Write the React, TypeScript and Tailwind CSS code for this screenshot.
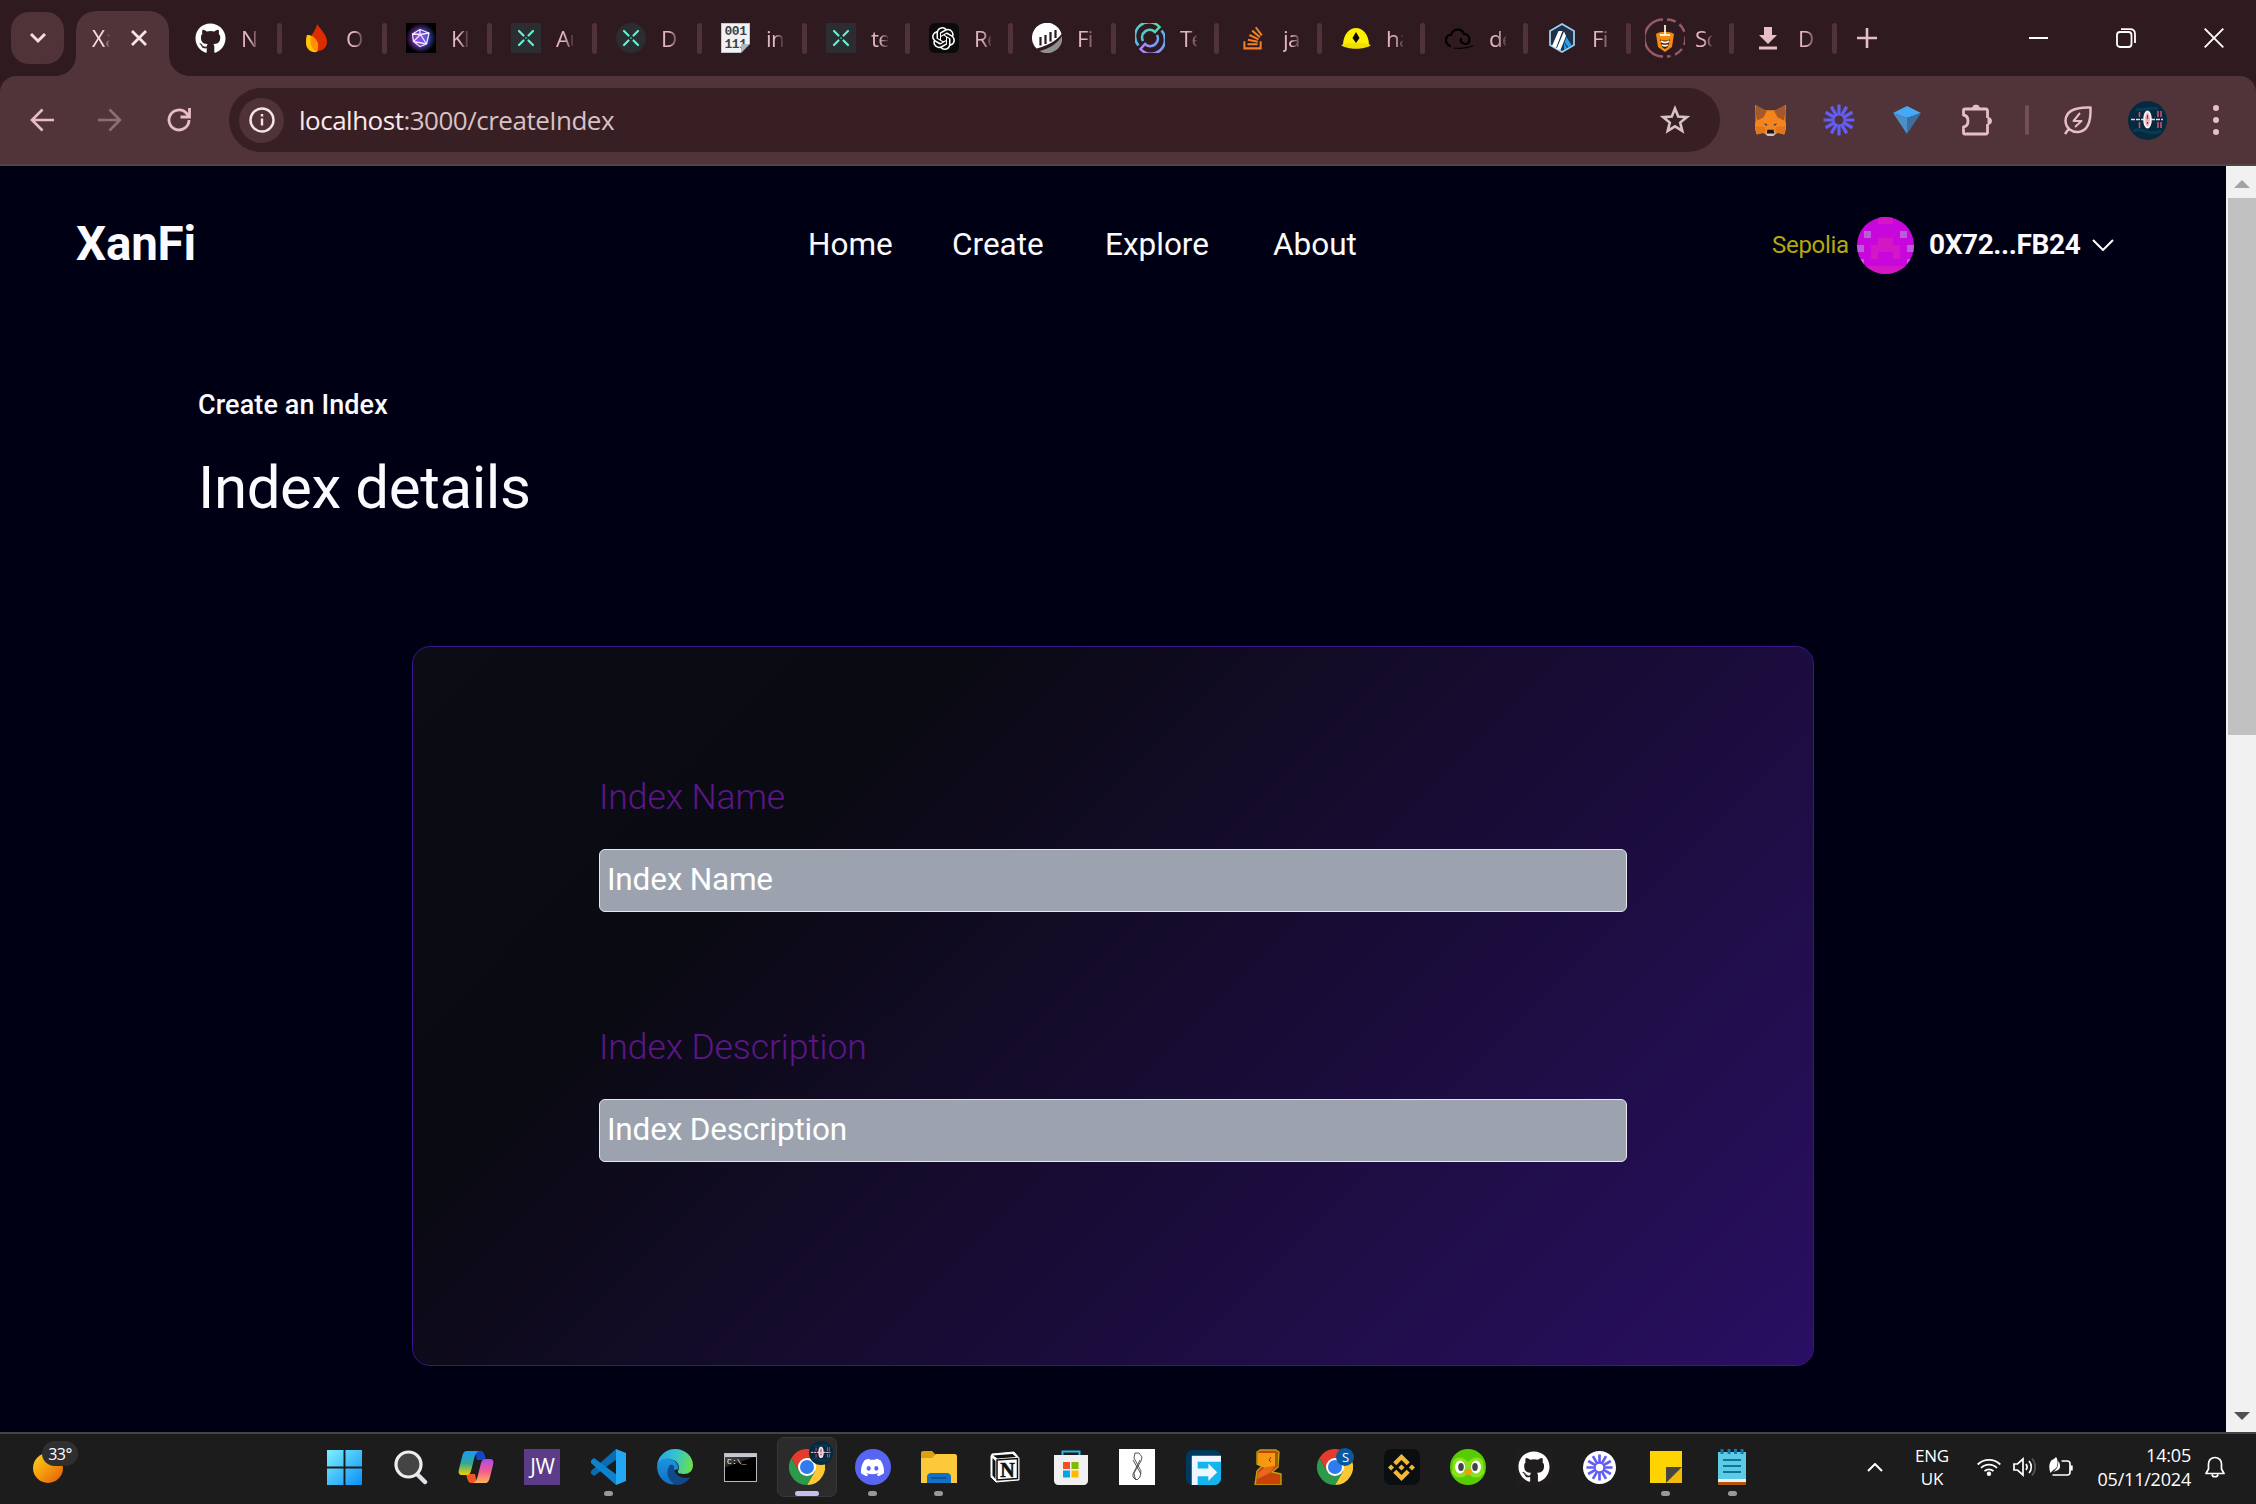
import React from "react";
import { FaGithub, FaStackOverflow } from "react-icons/fa";
import { SiOpenai, SiDiscord, SiBinance } from "react-icons/si";

const X = ({ round }: { round?: boolean }) => (
  <svg viewBox="0 0 30 30" className="size-[30px]">
    <rect width="30" height="30" rx={round ? 15 : 0} fill="#2b2d31" />
    <path d="M8 8l4.500 4.500M22 8l-4.500 4.500M8 22l4.500-4.500M22 22l-4.500-4.500" stroke="#63f0d6" strokeWidth="2.200" strokeLinecap="round" />
    <path d="M14 14l2 2M16 14l-2 2" stroke="#2c8f80" strokeWidth="1" />
  </svg>
);

const Flame = () => (
  <svg viewBox="0 0 30 30" className="size-[30px]">
    <path d="M16 1c4 6 10 11 10 18 0 5-4 9-9 9-6 0-8-5-8-10C9 12 15 8 16 1z" fill="#dd2c00" />
    <path d="M6 12c5-1 11 5 11 11 0 3-1 5-1 6-6 1-11-3-11-9 0-3 0-6 1-8z" fill="#ffc400" />
    <path d="M10 13c5 2 8 7 7 12l-1 4c-5-2-8-9-6-16z" fill="#ff9100" />
  </svg>
);

const Kleros = () => (
  <svg viewBox="0 0 30 30" className="size-[30px]">
    <defs>
      <linearGradient id="klc" x1="0" y1="0" x2="1" y2="0"><stop offset="0" stopColor="#b63fe0" /><stop offset=".5" stopColor="#7a52e0" /><stop offset="1" stopColor="#2f5fe8" /></linearGradient>
      <radialGradient id="klm"><stop offset=".3" stopColor="#fff" /><stop offset="1" stopColor="#000" /></radialGradient>
      <mask id="klk"><circle cx="15" cy="15" r="15" fill="url(#klm)" /></mask>
    </defs>
    <rect width="30" height="30" fill="#000" />
    <circle cx="15" cy="15" r="15" fill="url(#klc)" mask="url(#klk)" />
    <path d="M14 6.500l9 3.500-2.500 11L14 23.500l-6.500-5L6.500 11z M6.500 11l8 .500L23 10M14.500 11.500l6 9.500-13-2.500z M14 6.500v5" fill="none" stroke="#f0e6ff" strokeWidth="1.300" strokeLinejoin="round" />
  </svg>
);

const Binary = () => (
  <div className="relative flex h-[30px] w-[29px] flex-col items-center justify-center bg-[#f2f2f2] font-['Liberation_Mono'] text-[13px] leading-[13px] font-bold tracking-[-0.5px] text-[#3c4248] shadow-[inset_0_0_0_1px_#bfc8ce]">
    <span>001</span>
    <span>111</span>
    <div className="absolute right-0 bottom-0 size-[9px] bg-[#a9b8c2] [clip-path:polygon(0_0,100%_0,0_100%)]" />
    <div className="absolute right-0 bottom-0 size-[9px] bg-[#2f1a1f] [clip-path:polygon(100%_0,100%_100%,0_100%)]" />
  </div>
);

const Gpt = () => (
  <div className="flex size-[30px] items-center justify-center rounded-[6px] bg-[#0b0b0b]">
    <SiOpenai className="size-[23px] text-white" />
  </div>
);

const Etherscan = () => (
  <svg viewBox="0 0 30 30" className="size-[30px]">
    <path d="M4.500 25.500A15 15 0 1 1 29.500 11C25 18 14 23 4.500 25.500z" fill="#fff" />
    <path d="M7.500 28C17 26 26 20 30 13a15 15 0 0 1-22.500 15z" fill="#8e9090" />
    <path d="M8.500 14v8.500M13.500 12v9M18.500 9v9.500M23.500 7v8" stroke="#2f1a1f" strokeWidth="2.200" />
  </svg>
);

const Circle = () => (
  <svg viewBox="0 0 30 30" className="size-[30px]" fill="none" strokeWidth="2.600">
    <defs>
      <linearGradient id="c1" x1="0" x2="1" y1="1" y2="0"><stop offset="0" stopColor="#55b6f2" /><stop offset="1" stopColor="#4fe29a" /></linearGradient>
      <linearGradient id="c2" x1="0" x2="1" y1="1" y2="0"><stop offset="0" stopColor="#b57cff" /><stop offset="1" stopColor="#4db7ef" /></linearGradient>
    </defs>
    <path d="M3.500 22.500A13.600 13.600 0 0 1 24.500 4L20 9A7.600 7.600 0 0 0 8 18" stroke="url(#c1)" />
    <path d="M26.500 7.500A13.600 13.600 0 0 1 5.500 26L10 21A7.600 7.600 0 0 0 22 12" stroke="url(#c2)" />
  </svg>
);

const Hat = () => (
  <svg viewBox="0 0 30 30" className="size-[30px]">
    <path d="M2 22C2 12 8 5 15 5s13 7 13 17z" fill="#fff100" />
    <path d="M0 22c8-3 22-3 30 0-6 5-24 5-30 0z" fill="#f0e000" />
    <path d="M15 9l3.500 6-3.500 5-3.500-5z" fill="#0a0a0a" />
  </svg>
);

const Cloud = () => (
  <svg viewBox="0 0 30 30" className="size-[30px]" fill="none" stroke="#000" strokeWidth="2.200" strokeLinecap="round">
    <path d="M6 23c-6-3-5-11 1-11C9 5 18 5 20 11c7 0 7 11 1 10-3-1-5-2-4-5" />
    <path d="M10 25c7 1 13 0 19-2" strokeWidth="1.200" />
  </svg>
);

const Arbitrum = () => (
  <svg viewBox="0 0 30 30" className="size-[30px]">
    <path d="M15 1l12 7v14l-12 7-12-7V8z" fill="#213147" stroke="#9dcced" strokeWidth="1.800" />
    <path d="M11.500 8h4L9 25l-4-2z M17 8.500l2 4.500-5.500 14-4-1z" fill="#fff" />
    <path d="M19.500 14l5 8-3 2.500-4-5z M17 20l3 5-3 2z" fill="#28a0f0" />
  </svg>
);

const Sherlock = () => (
  <svg viewBox="0 0 40 40" className="-mx-[5px] size-[40px] shrink-0">
    <path d="M18 1.500A18.500 18.500 0 0 0 18 38.500" fill="none" stroke="#96596a" strokeWidth="2.400" />
    <path d="M22 1.500A18.500 18.500 0 0 1 22 38.500" fill="none" stroke="#96596a" strokeWidth="2.400" strokeDasharray="9 4.500" />
    <path d="M11 16c4-3 14-3 18 0l-2 13-7 5-7-5z" fill="#f58a12" />
    <path d="M15 21c2 2 8 2 10 0l-2 8-3 2-3-2z" fill="#3a1a10" />
    <path d="M16 23c2 2 6 2 8 0M17 27c2 1 4 1 6 0M15 17h10M20 7v10" fill="none" stroke="#fff3d8" strokeWidth="1.800" />
  </svg>
);

const Download = () => (
  <svg viewBox="0 0 30 30" className="size-[30px]" fill="#e7bdc6">
    <path d="M11 4h8v8h5l-9 9-9-9h5z M6 23.500h18v3H6z" />
  </svg>
);

const tabs: { t: string; icon: React.ReactNode }[] = [
  { t: "N", icon: <FaGithub className="size-[31px] text-white" /> },
  { t: "O", icon: <Flame /> },
  { t: "Kl", icon: <Kleros /> },
  { t: "Au", icon: <X /> },
  { t: "D", icon: <X round /> },
  { t: "in", icon: <Binary /> },
  { t: "te", icon: <X /> },
  { t: "Re", icon: <Gpt /> },
  { t: "Fi", icon: <Etherscan /> },
  { t: "Te", icon: <Circle /> },
  { t: "ja", icon: <FaStackOverflow className="size-[26px] text-[#f48024]" /> },
  { t: "ha", icon: <Hat /> },
  { t: "de", icon: <Cloud /> },
  { t: "Fi", icon: <Arbitrum /> },
  { t: "Sc", icon: <Sherlock /> },
  { t: "D", icon: <Download /> },
];

const TabStrip = () => (
  <div className="flex h-[76px] items-center bg-[#2f1a1f] pl-[11px]">
    <button className="flex h-[52px] w-[53px] items-center justify-center rounded-[18px] bg-[#503338]">
      <svg viewBox="0 0 20 20" className="size-5" fill="none" stroke="#f3dde0" strokeWidth="3"><path d="M3 6l7 7 7-7" /></svg>
    </button>
    <div className="relative ml-3 flex h-[65px] w-[93px] items-center self-end rounded-t-[20px] bg-[#503439] pb-[11px] pl-4">
      <div className="absolute bottom-0 -left-5 size-5 bg-[radial-gradient(circle_at_0_0,transparent_19.500px,#503439_20px)]" />
      <div className="absolute -right-5 bottom-0 size-5 bg-[radial-gradient(circle_at_100%_0,transparent_19.500px,#503439_20px)]" />
      <span className="w-[18px] text-[23px] text-[#f3dde0] [mask-image:linear-gradient(to_right,black_60%,transparent)]">Xa</span>
      <svg viewBox="0 0 16 16" className="ml-[21px] size-4" stroke="#f6e4e6" strokeWidth="2.800"><path d="M1 1l14 14M15 1L1 15" /></svg>
    </div>
    <div className="ml-[8px] flex">
      {tabs.map((tab, i) => (
        <div key={i} className={`flex h-[31px] items-center ${i < 6 ? "w-[105px]" : "w-[103px]"}`}>
          <div className="ml-[18px] flex w-[31px] shrink-0 items-center justify-center">{tab.icon}</div>
          <span className="mt-[2px] ml-[15px] w-[17px] shrink-0 text-[22.500px] tracking-[-0.800px] whitespace-nowrap text-[#e3b6bf] [mask-image:linear-gradient(to_right,black_50%,transparent_110%)]">{tab.t}</span>
          <div className="ml-auto h-[31px] w-[5px] rounded-full bg-[#503338]" />
        </div>
      ))}
    </div>
    <svg viewBox="0 0 20 20" className="ml-[20px] size-5" stroke="#e7bdc6" strokeWidth="2.600"><path d="M10 0v20M0 10h20" /></svg>
    <div className="mr-[32px] ml-auto flex items-center">
      <div className="h-[2px] w-[19px] bg-white" />
      <svg viewBox="0 0 20 20" className="ml-[68px] size-5" fill="none" stroke="#fff" strokeWidth="1.800">
        <rect x="1" y="4" width="14.500" height="15" rx="3" /><path d="M5 1.200h9c3 0 5 2 5 5V15" />
      </svg>
      <svg viewBox="0 0 20 20" className="ml-[68px] size-5" stroke="#fff" strokeWidth="1.900"><path d="M.7.700l18.600 18.600M19.300.700L.7 19.300" /></svg>
    </div>
  </div>
);

const Loom = ({ className, color = "#625df5" }: { className: string; color?: string }) => (
  <svg viewBox="-16 -16 32 32" className={className}>
    {[0, 30, 60, 90, 120, 150].map((a) => (
      <path key={a} d="M-15.500 0h10.500M5 0h10.500" transform={`rotate(${a})`} stroke={color} strokeWidth="3.200" />
    ))}
    <circle r="5.500" fill="none" stroke={color} strokeWidth="2" />
  </svg>
);

const Avatar = ({ className }: { className: string }) => (
  <svg viewBox="0 0 39 39" className={className}>
    <circle cx="19.500" cy="19.500" r="19.500" fill="#052a40" />
    <path d="M5 30c8-5 16 6 28 0M8 8c8 3 14-3 22 0" stroke="#0b3a52" strokeWidth="3" fill="none" />
    <path d="M3 18.500h32" stroke="#f2d3da" strokeWidth="1.600" strokeDasharray="4 1" />
    <ellipse cx="19.500" cy="18.500" rx="3.300" ry="8" fill="#e9aebd" stroke="#fbeef0" strokeWidth="2" />
    <path d="M19.500 14v4M19.500 21v2" stroke="#a02b4b" strokeWidth="1.200" />
    <path d="M11.500 11v5M11.500 21v6M30 10v6M30 21v6M33 10v6M33 21v6" stroke="#c7506f" strokeWidth="1.600" />
  </svg>
);

const Toolbar = () => (
  <div className="bg-[#2f1a1f]">
    <div className="flex h-[90px] items-center rounded-t-[16px] border-b-2 border-[#534345] bg-[#503439] pl-[30px]">
      <svg viewBox="0 0 24 24" className="size-6" fill="none" stroke="#e7bdc6" strokeWidth="2.600"><path d="M24 12H2M12.500 1.500L2 12l10.500 10.500" /></svg>
      <svg viewBox="0 0 24 24" className="ml-11 size-6" fill="none" stroke="#8d6e74" strokeWidth="2.600"><path d="M0 12h22M11.500 1.500L22 12 11.500 22.500" /></svg>
      <svg viewBox="0 0 24 24" className="ml-[45px] size-6" fill="none" stroke="#e7bdc6" strokeWidth="2.800"><path d="M22 12a10 10 0 1 1-3-7.200L22 8M22.500 0v9h-9" /></svg>
      <div className="ml-[38px] flex h-16 w-[1491px] items-center rounded-full bg-[#381f23] pl-[10px]">
        <div className="flex size-[45px] items-center justify-center rounded-full bg-[#503338]">
          <svg viewBox="0 0 26 26" className="size-[26px]" fill="none" stroke="#f6e4e6" strokeWidth="2.400"><circle cx="13" cy="13" r="11.500" /><path d="M13 11.500v7M13 7v2.500" /></svg>
        </div>
        <span className="ml-[15px] text-[26px] tracking-[-0.500px] text-[#d9c2c5]"><span className="text-[#fbe9eb]">localhost</span>:3000/createIndex</span>
        <svg viewBox="0 0 30 30" className="mr-[30px] ml-auto size-[30px]" fill="none" stroke="#d9c2c5" strokeWidth="2.600"><path d="M15 3.500l3.200 8 8.600.600-6.600 5.500 2.100 8.300L15 21.300l-7.300 4.600 2.100-8.300-6.600-5.500 8.600-.600z" /></svg>
      </div>
      <svg viewBox="0 0 30 30" className="ml-[35px] size-[31px]">
        <path d="M0 0l10 5h10l10-5-.5 15 1 6.500-2 7-6-1.500-3 1-1.500 2h-6l-1.500-2-3-1-6 1.500-2-7 1-6.500z" fill="#f5841f" />
        <path d="M1 0l10.500 6L8 12l-6 3L.5 7zM29 0L18.500 6 22 12l6 3 1.500-8z" fill="#a3592a" />
        <path d="M0 21h9l1.500 5L2 28.500zM30 21h-9l-1.500 5 8.500 2.500z" fill="#e2761b" />
        <path d="M11 25h8l1 3-2.500 2h-5L10 28z" fill="#d7c1b3" /><path d="M12 24h6l.8 3.500h-7.600z" fill="#161616" />
        <path d="M8.500 18l3.500.500-1 2zM21.500 18l-3.500.500 1 2z" fill="#3b4a57" />
      </svg>
      <Loom className="ml-[37px] size-[32px]" />
      <svg viewBox="0 0 28 28" className="ml-[38px] size-7">
        <path d="M14 0l14 7-14 5L0 7z" fill="#45a9f5" /><path d="M0 7l14 5v16z" fill="#4a8fc7" /><path d="M28 7l-14 5v16z" fill="#3a6f9f" />
      </svg>
      <svg viewBox="0 0 32 32" className="ml-10 size-8" fill="none" stroke="#e7bdc6" strokeWidth="2.800" strokeLinejoin="round">
        <path d="M4 5h8.500M17.500 5H25a1.500 1.500 0 0 1 1.500 1.500V14M26.500 20v8.500A1.500 1.500 0 0 1 25 30H4a1.500 1.500 0 0 1-1.500-1.500V23c6-1 6-11 0-12V6.500A1.500 1.500 0 0 1 4 5M12 5h7" />
        <path d="M11.500 4.500a3.500 3.500 0 0 1 7 0zM27 13.500a3.500 3.500 0 0 1 0 7z" fill="#e7bdc6" strokeWidth="1" />
      </svg>
      <div className="ml-[32px] h-[30px] w-[4px] rounded-full bg-[#744f57]" />
      <svg viewBox="0 0 30 30" className="ml-[34px] size-[30px]" fill="none" stroke="#e7bdc6" strokeWidth="2.500" strokeLinejoin="round">
        <path d="M27.500 2.500C14 2 3 5 2.500 15.500c0 8 7 12 13 11.500C25 26 28 16 27.500 2.500zM6 23.500L2 29" />
        <path d="M17 8l-6.500 8h8L12 22" strokeWidth="2" />
      </svg>
      <Avatar className="ml-[35px] size-[39px]" />
      <div className="ml-[46px] flex flex-col gap-[6px]">
        {[0, 1, 2].map((i) => <div key={i} className="size-[6px] rounded-full bg-[#e7bdc6]" />)}
      </div>
    </div>
  </div>
);

const IDENTICON_ROWS = ["...bb...", "........", ".p....p.", "...bb...", "p.bbbb.p", "..b..b..", "p......p", "bbbbbbbb"];

const Identicon = () => (
  <div className="grid size-[57px] shrink-0 grid-cols-8 grid-rows-8 overflow-hidden rounded-full bg-[#c807dc]">
    {IDENTICON_ROWS.join("").split("").map((c, i) => (
      <div key={i} className={c === "b" ? "bg-[#d416c6]" : c === "p" ? "bg-[#b95fd6]" : ""} />
    ))}
  </div>
);

const Field = ({ label, className }: { label: string; className: string }) => (
  <div className={className}>
    <label className="block h-[54px] text-[35.500px] leading-[54px] font-light tracking-[-0.100px] text-[#5c1688]">{label}</label>
    <div className="mt-[25px] flex h-[63px] w-[1028px] items-center rounded-[6px] border border-[#e5e7eb] bg-[#9ca3af] pb-[2px] pl-[7px] text-[31.500px] tracking-[-0.200px] text-white">
      {label}
    </div>
  </div>
);

const Page = () => (
  <div className="flex h-[1266px] bg-[#000014] font-[Roboto,sans-serif] text-[#fafaff]">
    <div className="flex w-[2226px] flex-col">
      <header className="flex h-[158px] items-center pl-[76px]">
        <div className="w-[732px] text-[47.500px] font-bold tracking-[-0.200px]">XanFi</div>
        <nav className="flex text-[31.500px]">
          <a className="w-[144px]">Home</a>
          <a className="w-[153px]">Create</a>
          <a className="w-[168px]">Explore</a>
          <a className="w-[120px]">About</a>
        </nav>
        <div className="ml-auto flex w-[454px] items-center">
          <span className="w-[85px] text-[24px] tracking-[-0.300px] text-[#b3a80c]">Sepolia</span>
          <Identicon />
          <span className="ml-[15px] w-[152px] text-[28px] font-bold tracking-[-0.400px]">0X72...FB24</span>
          <svg viewBox="0 0 22 12" className="ml-[11px] h-3 w-[22px]" fill="none" stroke="#fff" strokeWidth="2"><path d="M1 1l10 10L21 1" /></svg>
        </div>
      </header>
      <div className="mt-[61px] ml-[198px] text-[27px] leading-[40px] font-medium tracking-[0.100px]">Create an Index</div>
      <h1 className="mt-[28px] ml-[198px] text-[60px] leading-[70px] tracking-[-0.400px]">Index details</h1>
      <section className="mt-[123px] ml-[412px] h-[720px] w-[1402px] rounded-[18px] border border-[#3c1491] bg-[linear-gradient(135deg,#0c0d14_0%,#0a0a12_26%,#2a0f63_100%)] pl-[186px]">
        <Field label="Index Name" className="mt-[123px]" />
        <Field label="Index Description" className="mt-[108px]" />
      </section>
    </div>
    <div className="flex w-[30px] flex-col bg-[#f1f1f1] pl-[2px]">
      <div className="flex h-8 items-center justify-center pt-1"><div className="h-[8px] w-4 bg-[#a3a3a3] [clip-path:polygon(50%_0,100%_100%,0_100%)]" /></div>
      <div className="h-[537px] bg-[#c1c1c1]" />
      <div className="mt-auto flex h-8 items-center justify-center"><div className="h-[8px] w-4 bg-[#505050] [clip-path:polygon(0_0,100%_0,50%_100%)]" /></div>
    </div>
  </div>
);

const Chrome = () => (
  <svg viewBox="-18 -18 36 36" className="size-9">
    <path d="M-15.600-9A18 18 0 0 1 15.600-9H0L-7.800 4.500z" fill="#e33b2e" />
    <path d="M15.600-9A18 18 0 0 1 0 18L7.800 4.500 0-9z" fill="#fcc934" />
    <path d="M0 18A18 18 0 0 1-15.600-9L-7.800 4.500 7.800 4.500z" fill="#2d9a4b" />
    <circle r="9" fill="#fff" /><circle r="7" fill="#2f7bf0" />
  </svg>
);

const BAR: { icon: React.ReactNode; run?: boolean; active?: boolean }[] = [
  { icon: (
    <svg viewBox="0 0 36 36" className="size-[35px]"><defs><linearGradient id="w" x1="0" y1="0" x2="1" y2="1" gradientUnits="objectBoundingBox"><stop offset="0" stopColor="#7df1ff" /><stop offset="1" stopColor="#0a8ff5" /></linearGradient></defs>
      <path d="M0 0h17v17H0zM19 0h17v17H19zM0 19h17v17H0zM19 19h17v17H19z" fill="url(#w)" /></svg>) },
  { icon: (
    <svg viewBox="0 0 36 36" className="size-9"><path d="M24 24l9 9" stroke="#dfe3e8" strokeWidth="4.500" strokeLinecap="round" /><circle cx="16.500" cy="15.500" r="12.500" fill="#444" stroke="#eceff1" strokeWidth="3.200" /></svg>) },
  { icon: (
    <svg viewBox="0 0 36 36" className="size-9">
      <defs>
        <linearGradient id="p1" x1="0" y1="0" x2="0" y2="1"><stop offset="0" stopColor="#199af5" /><stop offset=".5" stopColor="#2fa79a" /><stop offset="1" stopColor="#f2d000" /></linearGradient>
        <linearGradient id="p2" x1="0" y1="0" x2="0" y2="1"><stop offset="0" stopColor="#a94df0" /><stop offset=".5" stopColor="#f25b8d" /><stop offset="1" stopColor="#ffb357" /></linearGradient>
      </defs>
      <path d="M17 2h6c2 0 3 2 4 5l1 4h-9z" fill="#1547c5" />
      <path d="M19 34h-6c-2 0-3-2-4-5l-1-4h9z" fill="#f2552c" />
      <path d="M9 2h12c-3 1-4 4-5 8l-3 12c-1 3-2 4-5 4H4c-3 0-4-2-3-6L4 8c1-4 2-6 5-6z" fill="url(#p1)" />
      <path d="M27 34H15c3-1 4-4 5-8l3-12c1-3 2-4 5-4h4c3 0 4 2 3 6l-3 12c-1 4-2 6-5 6z" fill="url(#p2)" />
    </svg>) },
  { icon: <div className="flex size-9 items-center justify-center bg-[#5c3b88] text-[21px] tracking-[-0.500px] text-white">JW</div> },
  { run: true, icon: (
    <svg viewBox="0 0 36 36" className="size-9"><path d="M26 0l1 10L4 27l-3-2.500v-2.500z" fill="#0a6db3" /><path d="M26 36l1-10L4 9l-3 2.500v2.500z" fill="#0b83cf" /><path d="M26 0l10 4v28l-10 4z" fill="#24a8f2" /></svg>) },
  { icon: (
    <svg viewBox="0 0 36 36" className="size-9">
      <defs>
        <linearGradient id="e1" x1="0" y1=".3" x2="1" y2=".5"><stop offset="0" stopColor="#2aa6e8" /><stop offset=".5" stopColor="#35c4cf" /><stop offset="1" stopColor="#6be04a" /></linearGradient>
        <linearGradient id="e2" x1="0" y1="0" x2="0" y2="1"><stop offset="0" stopColor="#1b95e0" /><stop offset="1" stopColor="#0f6fc4" /></linearGradient>
      </defs>
      <path d="M0 17A18 18 0 0 1 18 0c11 0 18 8 18 16 0 6-4 9-9 9-4 0-7-1-6-3 2-3 1-9-5-11C9 8 2 11 0 17z" fill="url(#e1)" />
      <path d="M0 17C2 10 9 8 15 10.500c5 2 7 7 6 10-6-1-9 7-3 15C8 36 0 28 0 17z" fill="url(#e2)" />
      <path d="M13 16c-4 5-4 16 7 20 6 0 11-4 13.500-8C27 31 16 27 17 17c-1-1-3-1.500-4-1z" fill="#114a8b" />
    </svg>) },
  { icon: (
    <div className="h-[29px] w-[33px] border border-[#b5b9c0] bg-black bg-[linear-gradient(160deg,#555_0%,#222_35%,#000_36%)]">
      <div className="h-[3px] bg-[#c4c8d0]" /><div className="pl-[2px] font-['Liberation_Mono'] text-[8px] leading-[10px] text-white">C:\_</div>
    </div>) },
  { active: true, icon: <div className="relative"><Chrome /><Avatar className="absolute -top-[8px] -right-[8px] size-6" /></div> },
  { run: true, icon: <div className="flex size-9 items-center justify-center rounded-full bg-[#5865f2]"><SiDiscord className="size-[23px] text-white" /></div> },
  { run: true, icon: (
    <svg viewBox="0 0 36 36" className="size-9"><path d="M0 4c0-1 1-2 2-2h9l4 4v4H0z" fill="#dca00c" /><path d="M0 9h11l4-4h19c1 0 2 1 2 2v27H0z" fill="#fcc93a" /><path d="M6 34v-6c0-3 2-4 4-4h16c2 0 4 1 4 4v6z" fill="#1271c4" /><path d="M11 29h14" stroke="#0a4d8c" strokeWidth="1.600" strokeLinecap="round" /></svg>) },
  { icon: (
    <svg viewBox="0 0 36 36" className="size-9"><path d="M4 7v21l5 5 23-2V9l-5-6L5 5z" fill="#fff" stroke="#fff" strokeWidth="1" strokeLinejoin="round" /><path d="M6 6.500l19.500-1.500 3.500 3-18.500 1.500z M5.500 9l3 3v18l-3-3.500z" fill="#111" /><path d="M10 11l20.500-1.500v20L10 31z" fill="#fff" stroke="#111" strokeWidth="1.500" /><text x="20.500" y="27.500" fontFamily="Liberation Serif" fontWeight="700" fontSize="20" textAnchor="middle" fill="#111" stroke="#111" strokeWidth=".600">N</text></svg>) },
  { icon: (
    <svg viewBox="0 0 36 36" className="size-9"><path d="M9.500 8V2.500h17V8" fill="none" stroke="#2fb2e8" strokeWidth="2" /><path d="M1 6h34v26c0 2-2 4-4 4H5c-2 0-4-2-4-4z" fill="#f0f0f0" /><path d="M10 13h7v7h-7z" fill="#f25022" /><path d="M18.500 13h7v7h-7z" fill="#7fba00" /><path d="M10 21.500h7v7h-7z" fill="#00a4ef" /><path d="M18.500 21.500h7v7h-7z" fill="#ffb900" /></svg>) },
  { icon: (
    <svg viewBox="0 0 36 36" className="size-9"><path d="M0 0h36v36H0z" fill="#fff" /><path d="M16 4h4l3 4-1 4-7 12 1 5 2 2 3-3 1-6-7-13zM14 11l8 14M21 11l-7 14v3l3 3" fill="none" stroke="#444" strokeWidth=".900" /></svg>) },
  { icon: (
    <svg viewBox="0 0 36 36" className="size-[35px]"><rect width="36" height="36" rx="7" fill="#00395e" /><path d="M6 8h30v21c0 4-3 7-7 7H6z" fill="#13b5ec" /><path d="M6 6h30v6H12v7h11v-5l9 9-9 9v-5H12v9H6z" fill="#eef7fd" /></svg>) },
  { icon: (
    <svg viewBox="0 0 36 36" className="size-9">
      <path d="M6 3l3-2h16l3 2-1 15-6 5 9 2v11H4l2-14 5-5-5-2z" fill="#c9420c" stroke="#b8a40c" strokeWidth="1.400" strokeLinejoin="round" />
      <path d="M7 4h17v13l-10 2-7-3z" fill="#f39a12" /><path d="M13 19l11-2-5 7-13 6 1-6z" fill="#e8671a" /><path d="M24 4l3-1v14l-3 1z" fill="#a85a0c" />
      <path d="M20 8l-2 3 2 2" stroke="#7a3d08" fill="none" strokeWidth="1" />
    </svg>) },
  { icon: <div className="relative"><Chrome /><div className="absolute -top-px -right-px flex size-[18px] items-center justify-center rounded-full bg-[#0b57a0] text-[13px] leading-none text-white">S</div></div> },
  { icon: <div className="flex size-9 items-center justify-center rounded-[7px] bg-[#0b0e11]"><SiBinance className="size-[27px] text-[#f3ba2f]" /></div> },
  { icon: (
    <svg viewBox="0 0 36 36" className="size-9"><circle cx="18" cy="18" r="18" fill="#58cc02" /><path d="M3 12c5-6 11-3 15 1 4-4 10-7 15-1l1 12c-4 6-12 6-16 0-4 6-12 6-16 0z" fill="#89e219" /><ellipse cx="10" cy="18" rx="5" ry="6.500" fill="#fff" /><ellipse cx="26" cy="18" rx="5" ry="6.500" fill="#fff" /><ellipse cx="11" cy="18" rx="2.800" ry="4" fill="#40454a" /><ellipse cx="25" cy="18" rx="2.800" ry="4" fill="#40454a" /><ellipse cx="18" cy="23" rx="3.500" ry="3" fill="#f39a12" /></svg>) },
  { icon: <div className="flex size-9 items-center justify-center bg-[#211c1f]"><FaGithub className="size-8 text-white" /></div> },
  { icon: <div className="flex size-[33px] items-center justify-center rounded-full bg-white"><Loom className="size-[27px]" /></div> },
  { run: true, icon: (
    <svg viewBox="0 0 32 32" className="size-8"><path d="M0 0h32v32H0z" fill="#fdd300" /><path d="M16 32L32 16v16z" fill="#f2b90c" /><path d="M16 16h16L16 32z" fill="#454545" /></svg>) },
  { run: true, icon: (
    <svg viewBox="0 0 28 36" className="h-9 w-7"><path d="M0 32h28v3a1 1 0 0 1-1 1H1a1 1 0 0 1-1-1z" fill="#b5540e" /><path d="M0 30h28v3H0z" fill="#eee" /><path d="M0 3h28v27H0z" fill="#5ecbe6" /><path d="M5 11h18M5 17h18M5 23h18" stroke="#0b7896" strokeWidth="2" /><path d="M4 0v5M11 0v5M17.500 0v5M24 0v5" stroke="#1279a8" strokeWidth="3" /></svg>) },
];

const Taskbar = () => (
  <div className="flex h-[72px] border-t-2 border-[#454545] bg-[#1c1c1c] text-white">
    <div className="w-[311px] pt-[7px] pl-[33px]">
      <div className="relative h-[45px] w-[46px]">
        <div className="absolute bottom-[3px] left-0 size-[30px] rounded-full bg-[linear-gradient(135deg,#ffd21a,#f59a0c_50%,#e2560a)]" />
        <div className="absolute top-0 left-[9px] flex h-[25px] w-9 items-center justify-center rounded-full bg-[#2f2f2f] text-[16px] tracking-[-0.500px]">33°</div>
      </div>
    </div>
    {BAR.map((b, i) => (
      <div key={i} className="flex w-[66.100px] justify-center pt-[3px]">
        <div className={`relative flex h-[60px] w-[60px] items-center justify-center rounded-[7px] ${b.active ? "border border-[#383838] bg-[#2b2b2b]" : ""}`}>
          {b.icon}
          {b.run && <div className="absolute bottom-px h-[5px] w-[9px] rounded-full bg-[#999]" />}
          {b.active && <div className="absolute bottom-0 h-[5px] w-6 rounded-full bg-[#c6bfee]" />}
        </div>
      </div>
    ))}
    <div className="ml-auto flex w-[389px] items-center pb-[4px]">
      <svg viewBox="0 0 16 9" className="h-[9px] w-4" fill="none" stroke="#fff" strokeWidth="2"><path d="M1 8l7-7 7 7" /></svg>
      <div className="ml-[25px] w-[48px] text-center text-[17px] leading-[23px] tracking-[-0.200px]">ENG<br />UK</div>
      <svg viewBox="0 0 24 18" className="ml-[21px] h-[18px] w-6" fill="none" stroke="#fff" strokeWidth="1.800">
        <path d="M.7 6.500a16 16 0 0 1 22.600 0M4 10a11 11 0 0 1 16 0M7.500 13.200a6.500 6.500 0 0 1 9 0" /><circle cx="12" cy="15.800" r="2.200" fill="#fff" stroke="none" />
      </svg>
      <svg viewBox="0 0 24 20" className="ml-3 h-5 w-6" fill="none" stroke="#fff" strokeWidth="1.700">
        <path d="M1 7h3.500L10 2v16l-5.500-5H1zM13 7a5 5 0 0 1 0 6M16 4a9 9 0 0 1 0 12" /><path d="M19 1.500a13 13 0 0 1 0 17" stroke="#555" />
      </svg>
      <svg viewBox="0 0 24 20" className="ml-3 h-5 w-6" fill="none" stroke="#fff" strokeWidth="1.700">
        <path d="M12.500 4h6A2.500 2.500 0 0 1 21 6.500v9a2.500 2.500 0 0 1-2.500 2.500H3.500" /><path d="M22.500 8.500v5" strokeWidth="2.400" /><path d="M7 0c2.500 3 2 10-1 12-2 1-3 2-4.500 4C-1 10 .5 3 5 2zM9 4c3 3 3 8-1 9.500-1.500.500-3 1-4 1.500C7 13 10 9 9 4z" fill="#fff" stroke="none" />
      </svg>
      <div className="ml-3 w-[106px] text-right text-[18px] leading-[24px] tracking-[-0.200px]">14:05<br />05/11/2024</div>
      <svg viewBox="0 0 20 22" className="ml-[14px] h-[22px] w-5" fill="none" stroke="#fff" strokeWidth="1.700" strokeLinejoin="round">
        <path d="M10 1.500c-4 0-6.500 3-6.500 6.500v5L1 17.500h18L16.500 13V8c0-3.500-2.500-6.500-6.500-6.500zM7 18.500c.500 3 5.500 3 6 0" />
      </svg>
    </div>
  </div>
);

export default function App() {
  return (
    <div className="flex h-[1504px] w-[2256px] flex-col overflow-hidden font-['Open_Sans','Noto_Sans',sans-serif]">
      <TabStrip />
      <Toolbar />
      <Page />
      <Taskbar />
    </div>
  );
}
